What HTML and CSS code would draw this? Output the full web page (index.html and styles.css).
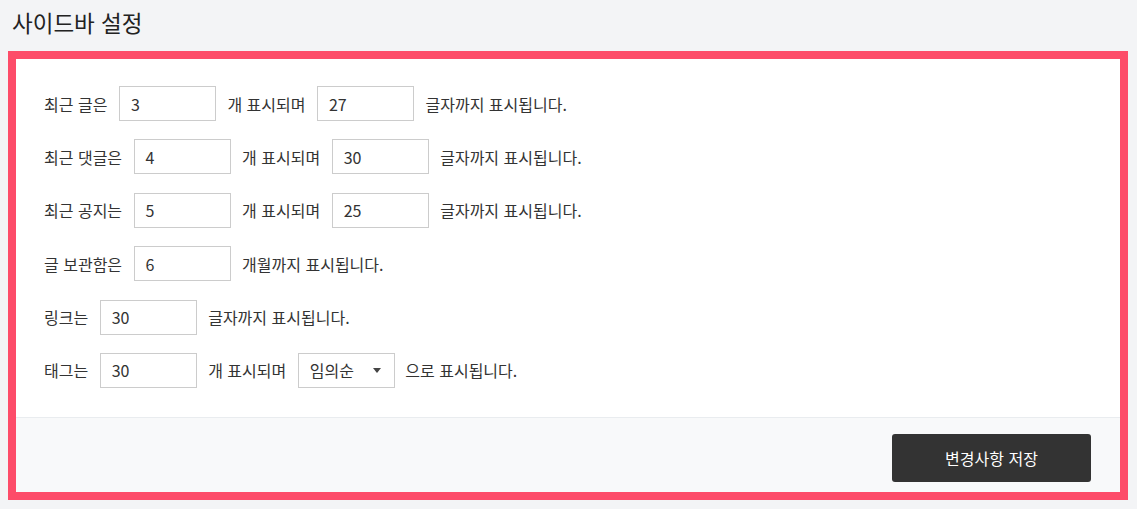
FILE: index.html
```html
<!DOCTYPE html>
<html lang="ko">
<head>
<meta charset="utf-8">
<title>사이드바 설정</title>
<link rel="stylesheet" href="styles.css">
</head>
<body>
<h2 class="title">사이드바 설정</h2>
<div class="panel">
  <div class="rows">
    <div class="row">
      <span class="label">최근 글은</span>
      <span class="field">3</span>
      <span class="label">개 표시되며</span>
      <span class="field">27</span>
      <span class="label">글자까지 표시됩니다.</span>
    </div>
    <div class="row">
      <span class="label">최근 댓글은</span>
      <span class="field">4</span>
      <span class="label">개 표시되며</span>
      <span class="field">30</span>
      <span class="label">글자까지 표시됩니다.</span>
    </div>
    <div class="row">
      <span class="label">최근 공지는</span>
      <span class="field">5</span>
      <span class="label">개 표시되며</span>
      <span class="field">25</span>
      <span class="label">글자까지 표시됩니다.</span>
    </div>
    <div class="row">
      <span class="label">글 보관함은</span>
      <span class="field">6</span>
      <span class="label">개월까지 표시됩니다.</span>
    </div>
    <div class="row">
      <span class="label">링크는</span>
      <span class="field">30</span>
      <span class="label">글자까지 표시됩니다.</span>
    </div>
    <div class="row">
      <span class="label">태그는</span>
      <span class="field">30</span>
      <span class="label">개 표시되며</span>
      <span class="field select">임의순<span class="caret"></span></span>
      <span class="label">으로 표시됩니다.</span>
    </div>
  </div>
  <div class="footer">
    <button class="save">변경사항 저장</button>
  </div>
</div>
</body>
</html>
```

FILE: styles.css
```css
html, body {
  margin: 0;
  padding: 0;
}
body {
  background: #f3f4f6;
  font-family: "Noto Sans CJK KR", "Noto Sans", sans-serif;
  color: #333;
  width: 1137px;
  height: 509px;
  overflow: hidden;
}
.title {
  margin: 0;
  padding: 6px 12px 0;
  height: 45px;
  font-size: 22.5px;
  font-weight: 400;
  color: #222;
  line-height: 32px;
}
.panel {
  margin: 0 9px 0 8px;
  border: 8px solid #fd4c69;
  background: #fff;
}
.rows {
  padding: 27px 28px 29px;
  display: flex;
  flex-direction: column;
  gap: 18.4px;
}
.row {
  display: flex;
  align-items: center;
  gap: 11.5px;
  height: 35px;
  font-size: 16px;
}
.label {
  white-space: nowrap;
}
.field {
  box-sizing: border-box;
  width: 97px;
  height: 35px;
  border: 1px solid #ccc;
  padding: 0 11px;
  display: flex;
  align-items: center;
  font-size: 16px;
  color: #333;
  background: #fff;
}
.select {
  justify-content: space-between;
  padding-right: 13px;
  margin-right: -1px;
}
.caret {
  width: 0;
  height: 0;
  border-left: 4px solid transparent;
  border-right: 4px solid transparent;
  border-top: 5px solid #444;
}
.footer {
  background: #f8f9fa;
  border-top: 1px solid #e9ecef;
  padding: 16px 29px 10px;
  display: flex;
  justify-content: flex-end;
}
.save {
  width: 199px;
  height: 48px;
  border: 0;
  border-radius: 3px;
  background: #333;
  color: #fff;
  font-family: "Noto Sans CJK KR", "Noto Sans", sans-serif;
  font-size: 16px;
  cursor: pointer;
}
```
